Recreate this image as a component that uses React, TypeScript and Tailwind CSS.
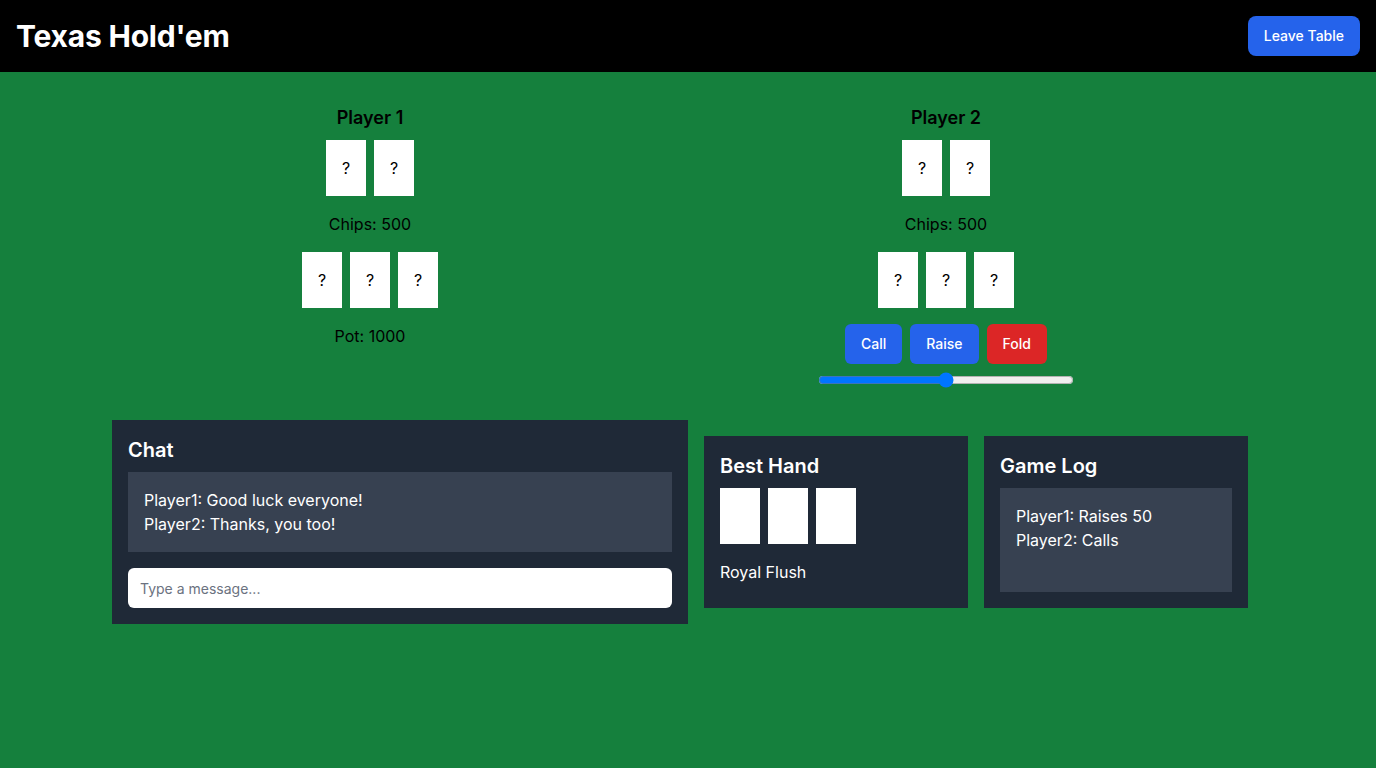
import React from 'react';

const Card: React.FC<{ label?: string }> = ({ label }) => (
  <div className="w-10 h-14 bg-white flex items-center justify-center text-black text-base">
    {label}
  </div>
);

const App: React.FC = () => {
  return (
    <div className="min-h-screen bg-[#15803d] font-['Inter',sans-serif]">
      {/* Header */}
      <header className="bg-black p-4 flex items-center justify-between">
        <h1 className="text-3xl font-bold text-white tracking-[-0.2px]">Texas Hold'em</h1>
        <button className="bg-[#2563eb] text-white text-sm font-medium px-4 py-2.5 rounded-lg">
          Leave Table
        </button>
      </header>

      {/* Table */}
      <section className="max-w-6xl mx-auto py-8 grid grid-cols-[516px_516px] gap-x-[60px] text-black">
        <div className="flex flex-col items-center">
          <h2 className="text-lg font-semibold">Player 1</h2>
          <div className="flex gap-2 mt-2">
            <Card label="?" />
            <Card label="?" />
          </div>
          <p className="mt-4">Chips: 500</p>
          <div className="flex gap-2 mt-4">
            <Card label="?" />
            <Card label="?" />
            <Card label="?" />
          </div>
          <p className="mt-4">Pot: 1000</p>
        </div>
        <div className="flex flex-col items-center">
          <h2 className="text-lg font-semibold">Player 2</h2>
          <div className="flex gap-2 mt-2">
            <Card label="?" />
            <Card label="?" />
          </div>
          <p className="mt-4">Chips: 500</p>
          <div className="flex gap-2 mt-4">
            <Card label="?" />
            <Card label="?" />
            <Card label="?" />
          </div>
          <div className="flex gap-2 mt-4">
            <button className="bg-[#2563eb] text-white text-sm font-medium px-4 py-2.5 rounded-md">Call</button>
            <button className="bg-[#2563eb] text-white text-sm font-medium px-4 py-2.5 rounded-md">Raise</button>
            <button className="bg-[#dc2626] text-white text-sm font-medium px-4 py-2.5 rounded-md">Fold</button>
          </div>
          <input type="range" defaultValue={50} className="w-64 mt-2" />
        </div>
      </section>

      {/* Bottom panels */}
      <section className="max-w-6xl mx-auto grid grid-cols-2">
        <div className="bg-[#1f2937] p-4 text-white">
          <h3 className="text-xl font-semibold">Chat</h3>
          <div className="bg-[#374151] p-4 mt-2">
            <p>Player1: Good luck everyone!</p>
            <p>Player2: Thanks, you too!</p>
          </div>
          <input
            type="text"
            placeholder="Type a message..."
            className="mt-4 w-full h-10 rounded-md bg-white px-3 text-sm text-black placeholder:text-[#6b7280] outline-none"
          />
        </div>
        <div className="p-4 grid grid-cols-2 gap-4">
          <div className="bg-[#1f2937] p-4 text-white">
            <h3 className="text-xl font-semibold">Best Hand</h3>
            <div className="flex gap-2 mt-2">
              <Card />
              <Card />
              <Card />
            </div>
            <p className="mt-4">Royal Flush</p>
          </div>
          <div className="bg-[#1f2937] p-4 text-white">
            <h3 className="text-xl font-semibold">Game Log</h3>
            <div className="bg-[#374151] p-4 mt-2 h-[104px]">
              <p>Player1: Raises 50</p>
              <p>Player2: Calls</p>
            </div>
          </div>
        </div>
      </section>
    </div>
  );
};

export default App;
